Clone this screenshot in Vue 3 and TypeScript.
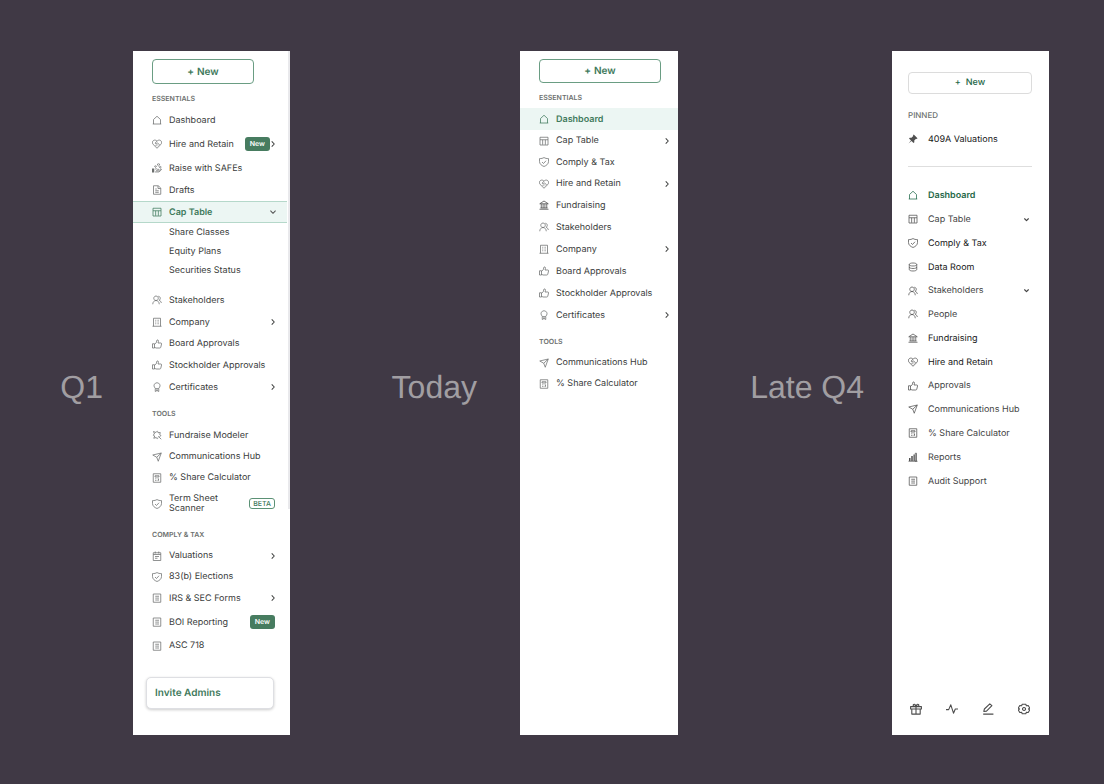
<script setup lang="ts">
interface Item {
  label: string
  icon?: string
  chevron?: 'right' | 'down'
  badge?: string
  outline?: boolean
  active?: boolean
  strong?: boolean
  kind?: 'snug' | 'tall' | 'double' | 'sub'
  gap?: boolean
}
interface Section {
  title?: string
  items: Item[]
}
interface Panel {
  id: string
  caption: string
  sections: Section[]
}
interface Icon {
  line?: string
  solid?: string
}

const icons: Record<string, Icon> = {
  home: { line: 'M3 18V9l7-6.5L17 9v9M1.5 18h17' },
  heart: {
    line: 'M10 18.500L2.200 10.800C0 8 .5 4.500 3 2.900 5.500 1.500 8.200 2.200 10 4.600c1.800-2.400 4.500-3.100 7-1.700 2.500 1.600 3 5.100.8 7.900zM10 4.600L6 8.300c.9 1.700 2.700 1.500 4 .2l1-.8 4.500 4.500M7 12l2.500 2.500M9.500 10.500l2.500 2.500',
  },
  coins: {
    line: 'M6 12.500c2-1.500 4-1 5 .2h3M8 15.500h5.500l4-3.200c1.300-.6 2 .8 1 1.600l-4.500 4H6M13 1.500a2 2 0 1 0 .1 0M7 5.500a1.500 1.500 0 1 0 .1 0M16.500 7a1.500 1.500 0 1 0 .1 0',
    solid: 'M0 11h4.500v8H0z',
  },
  doc: { line: 'M3 1.500h9.500L17.500 6V18.500H3zM12 2v5h5M6.500 8h3M6.500 11.500h7M6.500 14.700h7' },
  table: { line: 'M2 2.500h16v15.500H2zM2 7.500h16M7.300 7.500v10M12.700 7.500v10' },
  users: {
    line: 'M8 2a4.500 4.500 0 1 0 .1 0M1.500 18.500c0-4.500 3-7.500 6.500-7.500s6.500 3 6.500 7.500M12.500 2.500c4.500.2 5.500 6 1.800 8 2.500 1 4 3 4.400 5.500',
  },
  building: {
    line: 'M3 18.500v-16h14v16M1 18.500h18M6.500 6.500h1.500M9.500 6.500H11M12.500 6.500H14M6.500 10h1.500M9.500 10H11M12.500 10H14M6.500 13.500h1.500M9.500 13.500H11M12.500 13.500H14',
  },
  thumb: {
    line: 'M1 9.500H5V18H1zM5 10.500l3.500-3L10 2c2.500-.6 3.300 1.200 2.900 3L12 8h5.700c1.300 0 1.600 1 1.400 2L17.500 16.500c-.3 1-1 1.500-2 1.500H8l-3-1.500',
  },
  award: { line: 'M10 1.500a6 6 0 1 0 .1 0M6.500 12.500v6.500l3.500-2 3.500 2v-6.500M8 16h4' },
  puzzle: {
    line: 'M3 3l5 2c1.200-3.500 4.500-3 4 .5l4.500-.5-1 4.500c3 .5 2.500 3.500-.5 3.500M3 3L5 8c-3.500 1-3 4 .5 4L3.500 16.500l5-1.500c.5 3 3.500 3 3.500 0M12.500 12.500l6 6',
  },
  send: { line: 'M1.500 6L18.500 2 12.500 18.500 9.500 10.500zM9.500 10.500L18.500 2' },
  calc: {
    line: 'M2.500 1.500h15v17h-15zM6 5.500h8v2.500H6z',
    solid: 'M6 10.800h1.600v1.600H6zM9.200 10.800h1.600v1.600H9.200zM12.400 10.800H14v4.800h-1.600zM6 14h1.600v1.600H6zM9.200 14h1.600v1.600H9.200z',
  },
  shield: { line: 'M10 1c2.500 1.700 5 2.200 9 2.200V9c0 5-4 8-9 10C5 17 1 14 1 9V3.200C5 3.200 7.500 2.700 10 1zM6 10l3 3 5-5.500' },
  clipboard: { line: 'M2.500 3.500h15V19h-15zM2.500 7h15M6.500 1v4M13.500 1v4M6 11h8M6 14.500h5' },
  list: { line: 'M2.500 2h15v16.500h-15zM6.500 6.500h7.500M6.500 10.200h7.500M6.500 14h7.500' },
  bank: { line: 'M1.500 7.500L10 2l8.500 5.500zM1 18.500h18M3 16h14M4.500 8v8M8.200 8v8M11.800 8v8M15.500 8v8' },
  pin: { solid: 'M11.500 1L19 8.500 17.500 10l-1.500-.5-3.500 3.500.2 3.500L11 18l-4-4-6 5 5-6-4-4 1.500-1.700 3.500.2L10.500 4 10 2.500z' },
  database: {
    line: 'M10 2c4.500 0 7.500 1.200 7.500 3S14.500 8 10 8 2.500 6.800 2.500 5 5.500 2 10 2zM2.500 5v10c0 1.800 3 3 7.500 3s7.500-1.200 7.500-3V5M2.500 10c0 1.800 3 3 7.500 3s7.500-1.200 7.500-3',
  },
  bars: { line: 'M1 18.500h18M14.500 2.500H17v16h-2.500z', solid: 'M2 12h3v6H2zM6.500 8h3v10h-3zM11 5h2.500v13H11z' },
  gift: { line: 'M1 6h18v4H1zM3 10v8.500h14V10M10 6v12.500M10 6C6 6 4.500 4.500 5.500 2.800 7 1 9.500 2.500 10 6c.5-3.500 3-5 4.500-3.200C15.500 4.500 14 6 10 6' },
  pulse: { line: 'M0 11h4.500L8 3l4.500 14 3-7H20' },
  pen: { line: 'M3 14l1-4 9-8.500 3.500 3L7.500 13.500zM2 18.500h17' },
  gear: {
    line: 'M7 2h6l1 2.700 3-.5 2.500 4-1.800 1.800 1.800 1.800-2.500 4-3-.5-1 2.700H7l-1-2.700-3 .5-2.500-4L2.300 10 .5 8.200l2.500-4 3 .5zM10 7.500a2.500 2.500 0 1 0 .1 0',
  },
  right: { line: 'M7 4l6 6-6 6' },
  down: { line: 'M4 7l6 6 6-6' },
}

const panels: Panel[] = [
  {
    id: 'first',
    caption: 'Q1',
    sections: [
      {
        title: 'ESSENTIALS',
        items: [
          { label: 'Dashboard', icon: 'home' },
          { label: 'Hire and Retain', icon: 'heart', badge: 'New', chevron: 'right', kind: 'tall' },
          { label: 'Raise with SAFEs', icon: 'coins' },
          { label: 'Drafts', icon: 'doc' },
          { label: 'Cap Table', icon: 'table', chevron: 'down', active: true },
          { label: 'Share Classes', kind: 'sub' },
          { label: 'Equity Plans', kind: 'sub' },
          { label: 'Securities Status', kind: 'sub' },
          { label: 'Stakeholders', icon: 'users', gap: true },
          { label: 'Company', icon: 'building', chevron: 'right' },
          { label: 'Board Approvals', icon: 'thumb', kind: 'snug' },
          { label: 'Stockholder Approvals', icon: 'thumb' },
          { label: 'Certificates', icon: 'award', chevron: 'right' },
        ],
      },
      {
        title: 'TOOLS',
        items: [
          { label: 'Fundraise Modeler', icon: 'puzzle' },
          { label: 'Communications Hub', icon: 'send', kind: 'snug' },
          { label: '% Share Calculator', icon: 'calc', kind: 'snug' },
          { label: 'Term Sheet Scanner', icon: 'shield', badge: 'BETA', outline: true, kind: 'double' },
        ],
      },
      {
        title: 'COMPLY & TAX',
        items: [
          { label: 'Valuations', icon: 'clipboard', chevron: 'right', kind: 'snug' },
          { label: '83(b) Elections', icon: 'shield', kind: 'snug' },
          { label: 'IRS & SEC Forms', icon: 'list', chevron: 'right' },
          { label: 'BOI Reporting', icon: 'list', badge: 'New', kind: 'tall' },
          { label: 'ASC 718', icon: 'list', kind: 'snug' },
        ],
      },
    ],
  },
  {
    id: 'today',
    caption: 'Today',
    sections: [
      {
        title: 'ESSENTIALS',
        items: [
          { label: 'Dashboard', icon: 'home', active: true },
          { label: 'Cap Table', icon: 'table', chevron: 'right', kind: 'snug' },
          { label: 'Comply & Tax', icon: 'shield' },
          { label: 'Hire and Retain', icon: 'heart', chevron: 'right', kind: 'snug' },
          { label: 'Fundraising', icon: 'bank', strong: true },
          { label: 'Stakeholders', icon: 'users' },
          { label: 'Company', icon: 'building', chevron: 'right' },
          { label: 'Board Approvals', icon: 'thumb' },
          { label: 'Stockholder Approvals', icon: 'thumb' },
          { label: 'Certificates', icon: 'award', chevron: 'right' },
        ],
      },
      {
        title: 'TOOLS',
        items: [
          { label: 'Communications Hub', icon: 'send', kind: 'snug' },
          { label: '% Share Calculator', icon: 'calc', kind: 'snug' },
        ],
      },
    ],
  },
  {
    id: 'late',
    caption: 'Late Q4',
    sections: [
      { title: 'PINNED', items: [{ label: '409A Valuations', icon: 'pin', strong: true }] },
      {
        items: [
          { label: 'Dashboard', icon: 'home', active: true },
          { label: 'Cap Table', icon: 'table', chevron: 'down' },
          { label: 'Comply & Tax', icon: 'shield', strong: true },
          { label: 'Data Room', icon: 'database', strong: true },
          { label: 'Stakeholders', icon: 'users', chevron: 'down', kind: 'snug' },
          { label: 'People', icon: 'users' },
          { label: 'Fundraising', icon: 'bank', strong: true },
          { label: 'Hire and Retain', icon: 'heart', strong: true },
          { label: 'Approvals', icon: 'thumb', kind: 'snug' },
          { label: 'Communications Hub', icon: 'send' },
          { label: '% Share Calculator', icon: 'calc' },
          { label: 'Reports', icon: 'bars' },
          { label: 'Audit Support', icon: 'list' },
        ],
      },
    ],
  },
]

const shortcuts = [
  { icon: 'gift', label: 'Rewards' },
  { icon: 'pulse', label: 'Activity' },
  { icon: 'pen', label: 'Edit' },
  { icon: 'gear', label: 'Settings' },
]
</script>

<template>
  <main class="board">
    <template v-for="panel in panels" :key="panel.id">
      <h2 class="caption" :class="`caption-${panel.id}`">{{ panel.caption }}</h2>
      <nav class="panel" :class="panel.id" :aria-label="panel.caption">
        <button type="button" class="create"><span>+</span><span>New</span></button>
        <section v-for="(section, s) in panel.sections" :key="s" class="section">
          <h3 v-if="section.title" class="title">{{ section.title }}</h3>
          <ul class="list">
            <li v-for="item in section.items" :key="item.label" :class="{ gap: item.gap }">
              <component
                :is="item.chevron ? 'button' : 'a'"
                :href="item.chevron ? undefined : '#'"
                :type="item.chevron ? 'button' : undefined"
                class="row"
                :class="[item.kind, { active: item.active, strong: item.strong }]"
              >
                <svg class="icon" viewBox="0 0 20 20" aria-hidden="true">
                  <template v-if="item.icon">
                    <path v-if="icons[item.icon].line" class="line" :d="icons[item.icon].line" />
                    <path v-if="icons[item.icon].solid" class="solid" :d="icons[item.icon].solid" />
                  </template>
                </svg>
                <span class="label">{{ item.label }}</span>
                <span v-if="item.badge" class="badge" :class="{ outline: item.outline }">{{ item.badge }}</span>
                <svg v-if="item.chevron" class="chevron" viewBox="3 3 14 14" aria-hidden="true">
                  <path class="line" :d="icons[item.chevron].line" />
                </svg>
              </component>
            </li>
          </ul>
        </section>
        <button v-if="panel.id === 'first'" type="button" class="invite">Invite Admins</button>
        <span v-if="panel.id === 'first'" class="scroll"></span>
        <div v-if="panel.id === 'late'" class="shortcuts">
          <button v-for="shortcut in shortcuts" :key="shortcut.icon" type="button" :aria-label="shortcut.label">
            <svg viewBox="0 0 20 20" aria-hidden="true">
              <path class="line" :d="icons[shortcut.icon].line" />
            </svg>
          </button>
        </div>
      </nav>
    </template>
  </main>
</template>

<style>
body {
  margin: 0;
  background: #403945;
}
</style>

<style scoped>
.board {
  box-sizing: border-box;
  min-height: 100vh;
  padding: 51px 0 49px;
  display: grid;
  grid-template-columns: 133fr 157px 230fr 158px 214fr 157px 55fr;
  background: #403945;
  font-family: Inter, "Liberation Sans", sans-serif;
  text-rendering: geometricPrecision;
}
button {
  font: inherit;
  text-rendering: inherit;
  cursor: pointer;
}
.caption {
  margin: 0;
  align-self: center;
  text-align: right;
  padding: 0 30px 12px 0;
  font: 400 32px/40px "Liberation Sans", Arial, sans-serif;
  color: #a19ea2;
  white-space: nowrap;
}
.caption-today {
  padding-right: 43px;
}
.caption-late {
  padding-right: 28px;
}
.panel {
  --left: 19px;
  --right: 14px;
  --green: #3f7a5c;
  position: relative;
  box-sizing: border-box;
  background: #fff;
  display: flex;
  flex-direction: column;
  padding-top: 8px;
}
.today {
  --left: 19px;
  --right: 8px;
}
.late {
  --left: 16px;
  --right: 20px;
  --green: #1f6848;
  padding-top: 21px;
}
.create {
  box-sizing: border-box;
  height: 24px;
  margin: 0 36px 0 19px;
  padding: 0;
  display: flex;
  align-items: center;
  justify-content: center;
  gap: 3px;
  border: 1px solid #6a9d83;
  border-radius: 4px;
  background: #fff;
  color: var(--green);
  font-weight: 600;
  font-size: 10px;
  line-height: 12px;
}
.first .create {
  height: 25px;
}
.today .create {
  margin: 0 17px 0 19px;
}
.late .create {
  height: 22px;
  margin: 0 17px 0 16px;
  border-color: #dcdcdc;
  gap: 5px;
  font-weight: 500;
  font-size: 9px;
  line-height: 12px;
}
.title {
  margin: 0;
  padding: 9px 0 5px var(--left);
  font-size: 7px;
  line-height: 11px;
  font-weight: 600;
  color: #6c706e;
}
.section + .section .title {
  padding-top: 10px;
}
.list {
  list-style: none;
  margin: 0;
  padding: 0;
}
.row {
  box-sizing: border-box;
  width: 100%;
  height: 22px;
  padding: 0 var(--right) 0 var(--left);
  display: flex;
  align-items: center;
  border: 0;
  background: none;
  color: #3a3c3b;
  text-decoration: none;
  text-align: left;
  font-size: 9px;
  line-height: 10px;
}
.snug {
  height: 21px;
}
.tall {
  height: 26px;
}
.double {
  height: 31px;
}
.sub {
  height: 19px;
}
.gap {
  margin-top: 9px;
}
.icon {
  flex: none;
  width: 10px;
  height: 10px;
  margin-right: 7px;
  color: #6b6e6d;
}
.line {
  fill: none;
  stroke: currentColor;
  stroke-width: 1.5;
  stroke-linejoin: round;
}
.solid {
  fill: currentColor;
}
.label {
  flex: 1;
  padding-top: 1px;
  white-space: nowrap;
}
.double .label {
  white-space: normal;
  padding-right: 20px;
}
.chevron {
  flex: none;
  width: 6px;
  height: 6px;
}
.chevron .line {
  stroke-width: 2.4;
}
.badge {
  box-sizing: border-box;
  height: 14px;
  padding: 0 5px;
  border-radius: 3px;
  background: #477c60;
  color: #fff;
  font-size: 7px;
  line-height: 14px;
  font-weight: 600;
}
.badge:last-child {
  margin-right: 1px;
}
.outline {
  height: 11px;
  padding: 0 3px;
  border: 1px solid #5b9175;
  background: #fff;
  color: var(--green);
  line-height: 9px;
  font-weight: 500;
}
.active,
.active .icon {
  color: var(--green);
}
.active {
  font-weight: 600;
  background: #ecf6f3;
}
.active .chevron {
  color: #555;
}
.first .active {
  height: 22px;
  width: calc(100% - 3px);
  padding-right: 11px;
  border: solid #b5d8ca;
  border-width: 1px 0;
}
.late .row {
  height: 24px;
  color: #444;
}
.late .snug {
  height: 23px;
}
.late .active {
  background: none;
  color: var(--green);
}
.late .icon {
  margin-right: 10px;
  color: #505050;
}
.late .active .icon {
  color: var(--green);
}
.late .chevron {
  width: 5px;
  height: 5px;
}
.late .chevron .line {
  stroke-width: 3.4;
}
.late .strong {
  color: #181818;
}
.today .strong .icon {
  color: #444;
}
.late .title {
  padding: 16px 0 6px 16px;
  font-size: 8px;
  font-weight: 500;
}
.late .section + .section::before {
  content: "";
  display: block;
  height: 1px;
  margin: 15px 17px 16px 16px;
  background: #dedede;
}
.invite {
  box-sizing: border-box;
  height: 32px;
  margin: 21px 16px 0 13px;
  padding: 0 8px;
  border: 1px solid #dedfe3;
  border-radius: 5px;
  background: #fff;
  box-shadow: 0 1px 3px #0003;
  color: var(--green);
  text-align: left;
  font-weight: 600;
  font-size: 10px;
}
.scroll {
  position: absolute;
  top: 0;
  right: 0;
  width: 2px;
  height: 67%;
  background: #e9e9ec;
}
.shortcuts {
  margin-top: auto;
  padding: 0 19px 20px 18px;
  display: flex;
  justify-content: space-between;
}
.shortcuts button {
  padding: 0;
  border: 0;
  background: none;
  color: #4c4c4c;
  display: flex;
}
.shortcuts svg {
  width: 12px;
  height: 12px;
}
.shortcuts .line {
  stroke-width: 1.8;
}
</style>
